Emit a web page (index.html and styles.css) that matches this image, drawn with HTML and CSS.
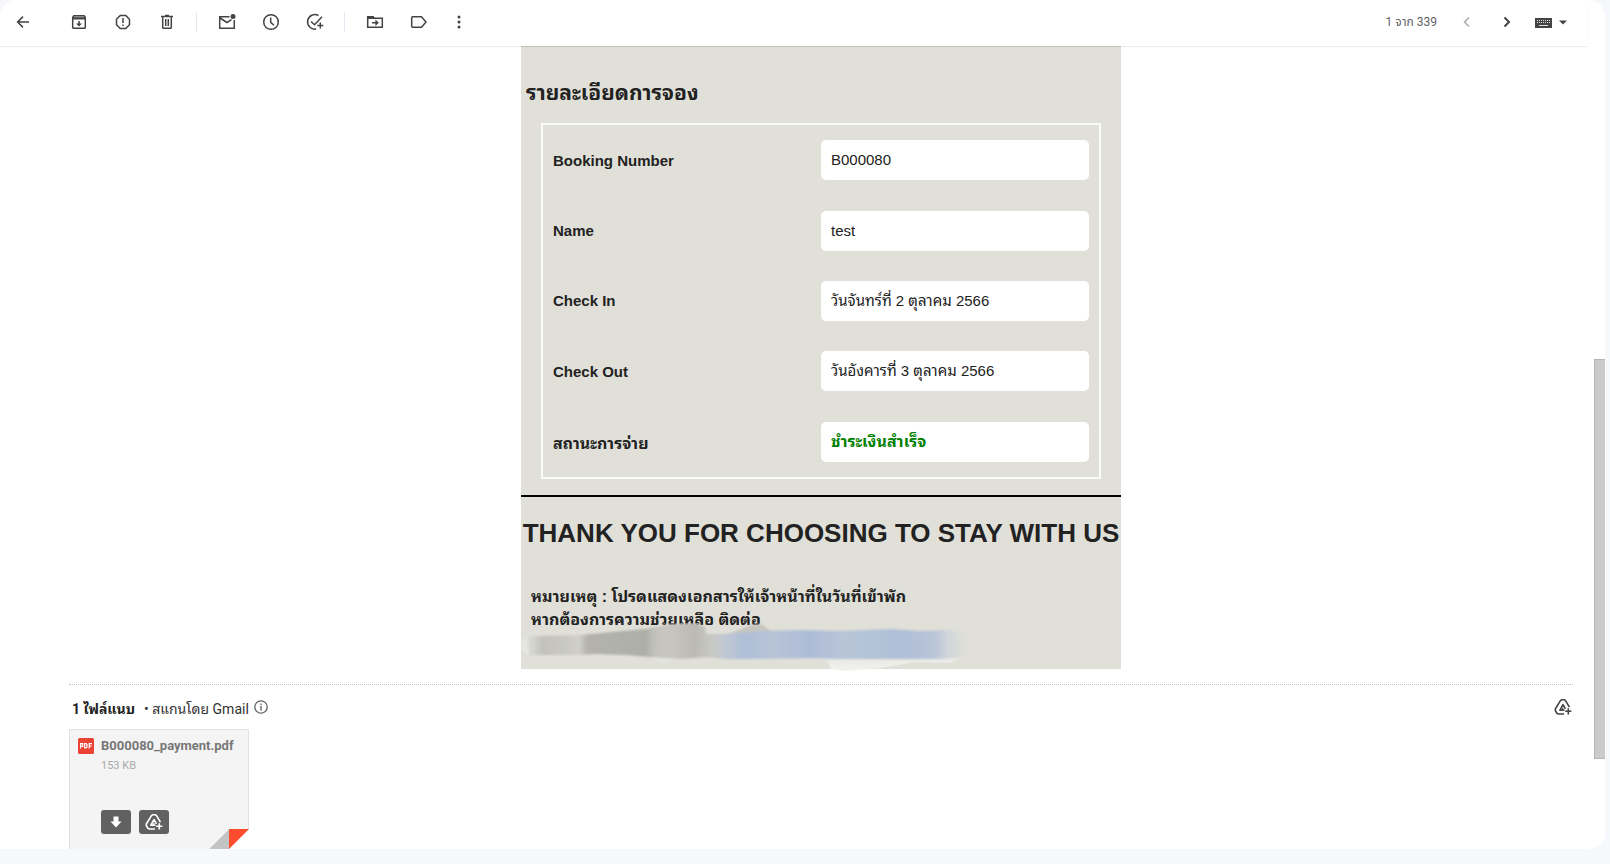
FILE: index.html
```html
<!DOCTYPE html>
<html lang="th">
<head>
<meta charset="utf-8">
<title>Gmail</title>
<link rel="stylesheet" href="styles.css">
</head>
<body>
<svg class="defs" aria-hidden="true">
  <symbol id="drive-add" viewBox="0 0 20 20">
    <g fill="none" stroke="currentColor" stroke-width="1.6" stroke-linejoin="round">
      <path d="M11 17H5.400L3.900 16.300 2.300 13.500V12L7.600 3.400 8.800 2.800H11.200L12.400 3.400 16.400 10.200"/>
      <path d="M11.400 13.200H6.900L10 7.600 12.400 11.800M9.200 13 10 11.200"/>
      <path d="M15.300 11.200V17.400M12.200 14.300H18.400"/>
    </g>
  </symbol>
</svg>
<main class="panel">
  <header class="toolbar">
    <button class="tool back" aria-label="กลับ"><svg viewBox="0 0 20 20"><path class="line" d="M16 10H4.800M10 4.600 4.600 10 10 15.400"/></svg></button>
    <button class="tool" aria-label="เก็บ"><svg viewBox="0 0 20 20"><path class="line" d="M3.700 6.500V15.500Q3.700 16.300 4.500 16.300H15.500Q16.300 16.300 16.300 15.500V6.500"/><path class="fill" d="M4.500 3H15.500L17 5V7.500H3V5Z"/><path d="M5 4.800H15" stroke="#aaa"/><path class="fill" d="M9.200 9H10.800V11.500H13L10 14.500 7 11.500H9.200Z"/></svg></button>
    <button class="tool" aria-label="รายงานจดหมายขยะ"><svg viewBox="0 0 20 20"><path class="line" d="M7.200 3.500H12.800L16.500 7.200V12.800L12.800 16.500H7.200L3.500 12.800V7.200Z"/><path class="line" d="M10 6V11M10 12.400V14.100"/></svg></button>
    <button class="tool" aria-label="ลบ"><svg viewBox="0 0 20 20"><path class="line" d="M4 4.500H16M8 3.600H12M5.700 5V15.500Q5.700 16.300 6.500 16.300H13.500Q14.300 16.300 14.300 15.500V5M8.700 7V14M11.300 7V14"/></svg></button>
    <span class="divider"></span>
    <button class="tool" aria-label="ทำเครื่องหมายว่ายังไม่อ่าน"><svg viewBox="0 0 20 20"><path class="line" d="M12.500 4.700H2.700V16.300H17.300V8M3 6 10 10.500 14.500 7.700"/><circle class="fill" cx="16" cy="4.500" r="2.500"/></svg></button>
    <button class="tool" aria-label="เลื่อนการแจ้งเตือน"><svg viewBox="0 0 20 20"><circle class="line" cx="10" cy="10" r="7.300"/><path class="line" d="M9.700 5.500V10.300L13 13.300"/></svg></button>
    <button class="tool" aria-label="เพิ่มใน Tasks"><svg viewBox="0 0 20 20"><path class="line" d="M13.500 3.500A7.300 7.300 0 1 0 11.200 17M6 9.500 9.500 12.800 17 4.700M15.300 10.500V16.500M12.300 13.500H18.300"/></svg></button>
    <span class="divider"></span>
    <button class="tool" aria-label="ย้ายไปที่"><svg viewBox="0 0 20 20"><path class="line" d="M2.700 4.700H8L9.500 6.200H17.300V15.300H2.700Z"/><path class="fill" d="M2 4H8L10 6V7H2ZM10.400 7.600 13.800 10.800 10.400 14V11.600H7V10H10.400Z"/></svg></button>
    <button class="tool" aria-label="ป้ายกำกับ"><svg viewBox="0 0 20 20"><path class="line" d="M3.700 4.700H12.500L17 10 12.500 15.300H3.700Q2.700 15.300 2.700 14.300V5.700Q2.700 4.700 3.700 4.700Z"/></svg></button>
    <button class="tool more" aria-label="เพิ่มเติม"><svg viewBox="0 0 20 20"><g class="fill"><circle cx="10" cy="5" r="1.500"/><circle cx="10" cy="10" r="1.500"/><circle cx="10" cy="15" r="1.500"/></g></svg></button>
    <span class="count">1 จาก 339</span>
    <button class="tool page dim" aria-label="ใหม่กว่า"><svg viewBox="0 0 20 20"><path class="line" d="M12 5.500 7.500 10 12 14.500"/></svg></button>
    <button class="tool page" aria-label="เก่ากว่า"><svg viewBox="0 0 20 20"><path class="line bold" d="M7.500 5.500 12 10 7.500 14.500"/></svg></button>
    <button class="keyboard" aria-label="เครื่องมือป้อนข้อมูล"><svg viewBox="0 0 34 12"><path class="fill" d="M0 2H17V12H0Z"/><path d="M2 4.500H15M2 6.500H15" stroke="#ddd" stroke-dasharray="1 1"/><path d="M4 9.500H13" stroke="#ddd"/><path class="fill" d="M24 4.500H32L28 8.500Z"/></svg></button>
  </header>

  <section class="content">
    <article class="mail">
      <h2 class="title">รายละเอียดการจอง</h2>
      <dl class="booking">
        <div class="row"><dt>Booking Number</dt><dd>B000080</dd></div>
        <div class="row"><dt>Name</dt><dd>test</dd></div>
        <div class="row"><dt>Check In</dt><dd>วันจันทร์ที่ 2 ตุลาคม 2566</dd></div>
        <div class="row"><dt>Check Out</dt><dd>วันอังคารที่ 3 ตุลาคม 2566</dd></div>
        <div class="row thai"><dt>สถานะการจ่าย</dt><dd class="paid">ชำระเงินสำเร็จ</dd></div>
      </dl>
      <h1 class="thanks">THANK YOU FOR CHOOSING TO STAY WITH US</h1>
      <p class="note">หมายเหตุ : โปรดแสดงเอกสารให้เจ้าหน้าที่ในวันที่เข้าพัก<br>หากต้องการความช่วยเหลือ ติดต่อ</p>
      <svg class="smear" viewBox="0 0 460 50" aria-hidden="true">
        <defs>
          <linearGradient id="tone" gradientUnits="userSpaceOnUse" x1="0" y1="0" x2="445" y2="0">
            <stop offset="0" stop-color="#e8e8e3"/><stop offset=".03" stop-color="#d2d2cc"/><stop offset=".05" stop-color="#c2c2bb"/><stop offset=".1" stop-color="#cacac3"/><stop offset=".13" stop-color="#d0d0c9"/>
            <stop offset=".15" stop-color="#b3b3ac"/><stop offset=".28" stop-color="#aeafa8"/><stop offset=".3" stop-color="#c2c2bb"/><stop offset=".33" stop-color="#c8c7c0"/><stop offset=".39" stop-color="#bbbab3"/>
            <stop offset=".43" stop-color="#c9c9c4"/><stop offset=".46" stop-color="#bfc8d3"/><stop offset=".5" stop-color="#afbfd8"/><stop offset=".57" stop-color="#b7c4d7"/><stop offset=".65" stop-color="#adbbd7"/>
            <stop offset=".72" stop-color="#b8c5d9"/><stop offset=".86" stop-color="#b0bfd7"/><stop offset=".93" stop-color="#b9c5d8"/><stop offset=".96" stop-color="#d1d6da"/><stop offset="1" stop-color="#e0e0d8"/>
          </linearGradient>
          <linearGradient id="rim" x1="0" y1="0" x2="0" y2="1"><stop offset="0" stop-color="#e8e8e3"/><stop offset="1" stop-color="#f1f1ee"/></linearGradient>
          <filter id="soft"><feGaussianBlur stdDeviation="1"/></filter>
        </defs>
        <path fill="url(#rim)" d="M305 35 440 34 430 40 395 39 360 45 325 48 310 46Z"/>
        <path fill="#e6e6e1" d="M8 12Q0 15 0 23T10 31ZM130 34H165L140 40Z"/>
        <path fill="#c6c6bf" filter="url(#soft)" d="M205 12 220 6 230 2 240 1 250 8 280 12Z"/>
        <path fill="url(#tone)" filter="url(#soft)" d="M6 13 60 12 90 9 125 6 150 1 175 0 184 4 185 11 205 11 240 8 280 7 320 8 370 6 399 8 430 7 445 12V35L410 36H308L300 35 230 36 205 36 185 34 160 36 128 34 105 32 75 31 60 32H8Z"/>
      </svg>
    </article>

    <section class="files">
      <div class="summary">
        <strong>1 ไฟล์แนบ</strong><span>• สแกนโดย Gmail</span>
        <svg class="info" viewBox="0 0 16 16"><circle cx="8" cy="8" r="6.200" fill="none" stroke="currentColor" stroke-width="1.300"/><path d="M8 7V11.500M8 4.500V6" stroke="currentColor" stroke-width="1.400"/></svg>
        <button class="save" aria-label="เพิ่มลงในไดรฟ์"><svg><use href="#drive-add"/></svg></button>
      </div>
      <div class="card">
        <svg class="pdf" viewBox="0 0 16 16"><rect width="16" height="16" rx="1.500" fill="#ea4335"/><path d="M2.600 10.500V5.700H4.700V8.500H2.600M6.700 5.700H8.200L9 6.500V9.100L8.200 9.900H6.700ZM11.200 10.500V5.700H14M11.200 8.200H13.500" fill="none" stroke="#fff" stroke-width="1.200"/></svg>
        <div class="info-col">
          <a class="name" href="#">B000080_payment.pdf</a>
          <span class="size">153 KB</span>
          <div class="actions">
            <button aria-label="ดาวน์โหลด"><svg viewBox="0 0 20 20"><path d="M7.500 4.500H12.500V9.500H15.500L10 15.500 4.500 9.500H7.500Z" fill="#fff"/></svg></button>
            <button aria-label="เพิ่มลงในไดรฟ์"><svg><use href="#drive-add"/></svg></button>
          </div>
        </div>
        <svg class="fold" viewBox="0 0 39 39"><path fill="#c3c3c3" d="M19 0V39H0V19Z"/><path fill="#f4f4f4" d="M0 0H19L0 19Z"/><path fill="#fff" d="M19 0H39V39H19Z"/><path fill="#ff4b2e" d="M19 0H39L19 20Z"/></svg>
      </div>
    </section>
  </section>
  <span class="thumb"></span>
</main>
</body>
</html>
```
FILE: styles.css
```css
* { box-sizing: border-box; }
body {
  margin: 0;
  background: #f6f8fc;
  color: #222;
  font-family: "Liberation Sans", "Noto Sans Thai Looped", Loma, "Tlwg Typo", Garuda, Waree, "Noto Sans Thai", sans-serif;
}
button { border: 0; padding: 0; background: none; color: inherit; }
svg { display: block; }
.defs { position: absolute; width: 0; height: 0; }
.fill { fill: currentColor; }
.line { fill: none; stroke: currentColor; stroke-width: 1.5; }
.line.bold { stroke-width: 2; }

.panel {
  position: relative;
  display: flex;
  flex-direction: column;
  height: calc(100vh - 15px);
  margin-right: 5px;
  overflow: hidden;
  background: #fff;
  border-radius: 16px 16px 16px 0;
}
.toolbar {
  flex: none;
  display: flex;
  align-items: center;
  height: 46px;
  margin-right: 18px;
  padding: 0 18px 2px 1px;
  color: #444;
  box-shadow: 0 1px 1px rgba(0, 0, 0, 0.08);
  z-index: 1;
}
.tool { display: flex; justify-content: center; width: 44px; }
.tool svg { width: 20px; height: 20px; }
.back { margin-right: 12px; }
.more { width: 36px; }
.divider { width: 1px; height: 20px; margin: 0 8px 0 7px; background: #e3e8f0; }
.count {
  margin-left: auto;
  margin-right: 10px;
  font: 12px Roboto, "Noto Sans Thai", sans-serif;
  color: #5f6368;
}
.page { width: 40px; }
.dim { color: #aaa; }
.keyboard { margin-left: 8px; }
.keyboard svg { width: 34px; height: 12px; }

.content {
  flex: 1;
  min-height: 0;
  overflow: hidden;
  padding: 0 32px 0 69px;
}
.mail {
  position: relative;
  max-width: 600px;
  min-height: 623px;
  margin: 0 auto 15px;
  background: #e0e0d8;
  border-top: 1px solid #d4d4cc;
}
.title { margin: 0; padding: 32px 5px 0; font-size: 21px; line-height: 28px; }
.booking {
  display: grid;
  grid-template-rows: repeat(5, 1fr);
  height: 356px;
  margin: 16px 20px;
  border: 2px solid #fafaf8;
  font-size: 15px;
}
.row { display: grid; grid-template-columns: 1fr 1fr; align-items: center; padding: 0 10px; }
.row dt { font-weight: 700; }
.row dd {
  margin: 0;
  padding: 0 10px;
  background: #fff;
  border-radius: 5px;
  line-height: 40px;
}
.thai { font-size: 16px; }
.row .paid { color: #008000; font-weight: 700; }
.thanks {
  margin: 0;
  padding-top: 20px;
  border-top: 2px solid #000;
  font-size: 26px;
  line-height: 32px;
  text-align: center;
  white-space: nowrap;
}
.note { margin: 0; padding: 36px 10px 0; font-size: 16px; font-weight: 700; line-height: 23px; }
.smear { position: absolute; left: 0; bottom: -4px; width: 460px; height: 50px; }

.files {
  border-top: 1px dotted #c4c4c4;
  font-family: Roboto, "Noto Sans Thai Looped", Loma, "Noto Sans Thai", sans-serif;
}
.summary {
  display: flex;
  align-items: center;
  height: 44px;
  padding: 0 0 0 3px;
  font-size: 14px;
  color: #333;
}
.summary strong { margin-right: 9px; color: #222; }
.info { width: 16px; height: 16px; margin-left: 4px; color: #5f6368; }
.save { margin-left: auto; color: #444; }
.save svg, .actions svg { width: 20px; height: 20px; }
.card {
  position: relative;
  display: flex;
  gap: 7px;
  width: 180px;
  height: 120px;
  padding: 8px;
  background: #f4f4f4;
  border: 1px solid #e2e2e2;
  border-bottom: 0;
}
.pdf { width: 16px; height: 16px; }
.info-col { display: flex; flex-direction: column; }
.name { font-size: 13px; font-weight: 700; line-height: 16px; color: #777; text-decoration: none; }
.size { margin-top: 4px; font-size: 11px; line-height: 16px; color: #aaa; }
.actions { display: flex; gap: 8px; margin-top: 36px; }
.actions button {
  display: flex;
  align-items: center;
  justify-content: center;
  width: 30px;
  height: 24px;
  background: #616161;
  border-radius: 3px;
  color: #fff;
}
.fold { position: absolute; right: -1px; bottom: -19px; width: 39px; height: 39px; }
.thumb {
  position: absolute;
  right: 0;
  top: 42.3%;
  width: 11px;
  height: 47.1%;
  background: #cbcbcb;
  border: 1px solid #b5b5b5;
  border-right: 0;
}
```
